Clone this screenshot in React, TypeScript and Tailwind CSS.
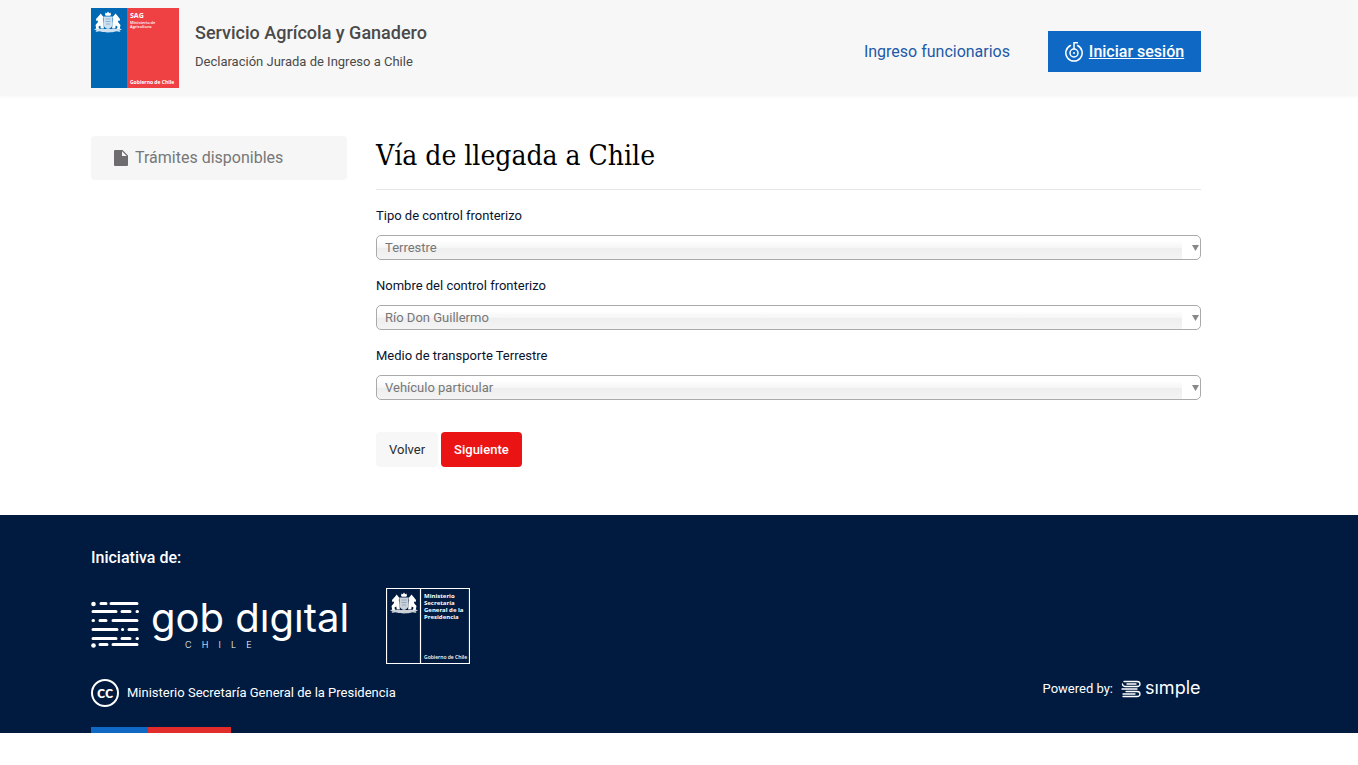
import React, { useState } from 'react';

const Emblem: React.FC = () => (
  <g fill="#fff">
    <path d="M11.500 1.500l1.300.8L14 .5l1.200 1.800 1.300-.8.500 2.500-1 .8h-4l-1-.8z" />
    <path d="M9.500 5.500h9v7.500c0 3-2.500 4.500-4.500 5-2-.5-4.500-2-4.500-5z" opacity=".8" />
    <path d="M2 8l3.200-3.500 1.500-2 1.300 1.700L9.500 6l-.7 2 .5 3 .6 6.500H6.800l-.5-3-1.800 1 .5 2.500H2.300L1.500 14l2.500-3-.3-1.500-1.400.5z" />
    <path d="M26 8l-2.800-3.500-1.700-2-1.300 1.700L18.500 6l.7 2-.5 3-.6 6.500h3.100l.5-3 1.800 1-.5 2.500h2.700l.8-4-2.500-3 .3-1.500 1.400.5z" />
    <path d="M0 18.500l3-1.500 4 1h14l4-1 3 1.500-2.500 1 1 1.500-4-.8c-5 1.600-12 1.600-17 0l-4 .8 1-1.500z" opacity=".8" />
    <path d="M11.500 8h5M11.500 10.500h5M12 13h4" stroke="#1b5f9f" strokeWidth=".7" opacity=".5" />
  </g>
);

const SagLogo: React.FC = () => (
  <svg width="88" height="80" viewBox="0 0 88 80" role="img" aria-label="SAG" className="shrink-0 font-['Open_Sans',sans-serif]">
    <rect width="36" height="80" fill="#0168b3" />
    <rect x="36" width="52" height="80" fill="#ef4144" />
    <g transform="translate(3 3)"><Emblem /></g>
    <text x="39" y="10" fontSize="7" fontWeight="700" fill="#fff">SAG</text>
    <text x="39" y="16" fontSize="4" fontWeight="600" fill="#fff">Ministerio de</text>
    <text x="39" y="20" fontSize="4" fontWeight="600" fill="#fff">Agricultura</text>
    <text x="39" y="76" fontSize="5" fontWeight="700" fill="#fff">Gobierno de Chile</text>
  </svg>
);

const MinisterioLogo: React.FC = () => (
  <svg width="84" height="76" viewBox="0 0 84 76" role="img" aria-label="Ministerio Secretaría General de la Presidencia" className="shrink-0 font-['Open_Sans',sans-serif]">
    <path d="M.5.5h83v75H.5zM34.500.5v75" fill="none" stroke="#fff" strokeWidth="1.2" />
    <g transform="translate(4 4)"><Emblem /></g>
    <g fill="#fff" fontWeight="700" fontSize="6">
      <text x="38" y="10">Ministerio</text>
      <text x="38" y="17">Secretaría</text>
      <text x="38" y="24">General de la</text>
      <text x="38" y="31">Presidencia</text>
      <text x="38" y="71" fontSize="5" fontWeight="600">Gobierno de Chile</text>
    </g>
  </svg>
);

const GobDigitalLogo: React.FC = () => (
  <svg width="260" height="76" viewBox="0 0 260 76" role="img" aria-label="gob digital Chile" className="shrink-0 font-['Inter',sans-serif]">
    <g stroke="#fff" strokeWidth="3" strokeLinecap="round" fill="none">
      <path d="M10 15.500h5M20 15.500h26" />
      <path d="M2 23.500h23M31 23.500h8M46 23.500h.5" />
      <path d="M2 32.500h.5M9 32.500h6M22 32.500h24" />
      <path d="M2 41.500h24M31.500 41.500h.2M38 41.500h8" />
      <path d="M2 50.500h23M31 50.500h8M46 50.500h.5" />
      <path d="M9 56.500h7M22 56.500h24" />
    </g>
    <circle cx="2.500" cy="16" r="2.300" fill="#fff" />
    <circle cx="2.500" cy="57.500" r="2.300" fill="#fff" />
    <text x="60" y="44" fontSize="40" fontWeight="400" fill="#fff">gob dıgıtal</text>
    <text x="94" y="60" fontSize="9" fontWeight="300" fill="#fff" className="whitespace-pre">C    H    I    L    E</text>
  </svg>
);

const SimpleLogo: React.FC = () => (
  <svg width="80" height="20" viewBox="0 0 80 20" role="img" aria-label="simple" className="shrink-0 font-['Inter',sans-serif]">
    <g fill="none" stroke="#fff" strokeWidth="1.300" strokeLinecap="round">
      <path d="M3 2.500h13q3 0 3 2.500t-3 2.500M6 5h9" />
      <path d="M1.500 5q0 2.500 3 2.500H16M1 10h15" />
      <path d="M5 12.500h11q3 0 3 2.500t-3 2.500H2M2 15h12" />
    </g>
    <text x="24" y="15" fontSize="18" fontWeight="400" fill="#fff">sımple</text>
  </svg>
);

const ClaveIcon: React.FC = () => (
  <svg width="18" height="22" viewBox="0 0 18 22" fill="none" stroke="#fff" aria-hidden="true">
    <path d="M5.500 4.500a8.200 8.200 0 1 0 7 0" strokeWidth="1.500" strokeLinecap="round" />
    <circle cx="9" cy="12" r="4" strokeWidth="1.500" />
    <path d="M9 8V1.800h4" strokeWidth="1.500" />
    <circle cx="9" cy="12" r="1" fill="#fff" stroke="none" />
  </svg>
);

interface SelectFieldProps {
  id: string;
  label: string;
  options: string[];
}

const SelectField: React.FC<SelectFieldProps> = ({ id, label, options }) => {
  const [value, setValue] = useState(options[0]);

  return (
    <div>
      <label htmlFor={id} className="block text-[13px] leading-5 text-[#0a132d]">{label}</label>
      <div className="relative mt-[9px]">
        <select
          id={id}
          value={value}
          onChange={(e) => setValue(e.target.value)}
          className="block h-[25px] w-full appearance-none rounded-[5px] border border-[#aaa] bg-[linear-gradient(#fff_20%,#f6f6f6_50%,#eee_52%,#f4f4f4_100%)] bg-[length:calc(100%-18px)_100%] bg-no-repeat px-2 text-[13px] text-[#777]"
        >
          {options.map((o) => (
            <option key={o}>{o}</option>
          ))}
        </select>
        <svg width="7" height="6" viewBox="0 0 7 6" className="pointer-events-none absolute right-[2px] top-[10px]" aria-hidden="true">
          <path d="M0 0h7L3.500 6z" fill="#888" />
        </svg>
      </div>
    </div>
  );
};

const App: React.FC = () => {
  return (
    <div className="font-['Roboto',sans-serif]">
      {/* Header */}
      <header className="flex h-24 items-center justify-between bg-[#f7f7f7] pl-[91px] pr-[157px] shadow-[0_1px_3px_#f7f7f7]">
        <div className="flex items-center gap-4">
          <SagLogo />
          <div>
            <p className="text-lg leading-6 font-medium text-[#4a4a4a]">Servicio Agrícola y Ganadero</p>
            <p className="mt-[7px] pb-1 text-[13px] leading-5 text-[#4a4a4a]">Declaración Jurada de Ingreso a Chile</p>
          </div>
        </div>
        <nav className="flex items-center gap-[38px] pt-[7px]">
          <a href="#funcionarios" className="text-base text-[#1d5aa8]">Ingreso funcionarios</a>
          <a href="#login" className="flex h-[41px] w-[153px] items-center justify-center gap-1.5 bg-[#0f69c4] text-base font-medium text-white">
            <ClaveIcon />
            <span className="underline">Iniciar sesión</span>
          </a>
        </nav>
      </header>

      <main className="grid grid-cols-[256px_1fr] items-start gap-x-[29px] pt-10 pb-12 pl-[91px] pr-[157px]">
        {/* Sidebar */}
        <aside>
          <a href="#tramites" className="flex h-11 items-center gap-[7px] rounded bg-[#f6f6f6] pl-[23px] text-base text-[#777]">
            <svg width="14" height="16" viewBox="0 0 14 16" fill="#6f6c6f" aria-hidden="true">
              <path d="M1 0H8.500L14 5.500V15Q14 16 13 16H1Q0 16 0 15V1Q0 0 1 0zM8 1.200V6h4.800z" fillRule="evenodd" />
            </svg>
            Trámites disponibles
          </a>
        </aside>

        {/* Form */}
        <form onSubmit={(e) => e.preventDefault()}>
          <h1 className="border-b border-[#e5e5e5] pb-[13px] font-['Roboto_Slab','DejaVu_Serif_Condensed','DejaVu_Serif',serif] text-[28px] leading-10 text-black">
            Vía de llegada a Chile
          </h1>
          <div className="mt-4 space-y-4">
            <SelectField id="tipo" label="Tipo de control fronterizo" options={['Terrestre', 'Aéreo', 'Marítimo']} />
            <SelectField id="control" label="Nombre del control fronterizo" options={['Río Don Guillermo']} />
            <SelectField id="medio" label="Medio de transporte Terrestre" options={['Vehículo particular', 'Bus']} />
          </div>
          <div className="mt-8 flex gap-[3px] text-[13px]">
            <button type="button" className="h-[35px] rounded bg-[#f7f7f7] px-[13px] text-[#292b2c]">Volver</button>
            <button type="submit" className="h-[35px] rounded bg-[#eb1414] px-[13px] font-medium text-white">Siguiente</button>
          </div>
        </form>
      </main>

      {/* Footer */}
      <footer className="bg-[#001b3f] pt-[31px] pl-[91px] pr-[157px] text-white">
        <p className="text-base font-medium">Iniciativa de:</p>
        <div className="mt-[18px] flex items-center gap-[35px]">
          <GobDigitalLogo />
          <MinisterioLogo />
        </div>
        <div className="mt-[15px] flex items-start justify-between text-[13px]">
          <div className="flex items-center gap-2">
            <svg width="28" height="28" viewBox="0 0 28 28" aria-hidden="true" className="font-['Lato',sans-serif]">
              <circle cx="14" cy="14" r="13" fill="none" stroke="#fff" strokeWidth="2" />
              <text x="14" y="19" textAnchor="middle" fontSize="17" fontWeight="700" fill="#fff">cc</text>
            </svg>
            <span>Ministerio Secretaría General de la Presidencia</span>
          </div>
          <div className="flex items-center gap-2">
            <span>Powered by:</span>
            <SimpleLogo />
          </div>
        </div>
        <div className="mt-5 flex h-1.5 w-[140px]">
          <div className="w-[57px] bg-[#0f69c4]" />
          <div className="flex-1 bg-[#e22c2c]" />
        </div>
      </footer>
    </div>
  );
};

export default App;
